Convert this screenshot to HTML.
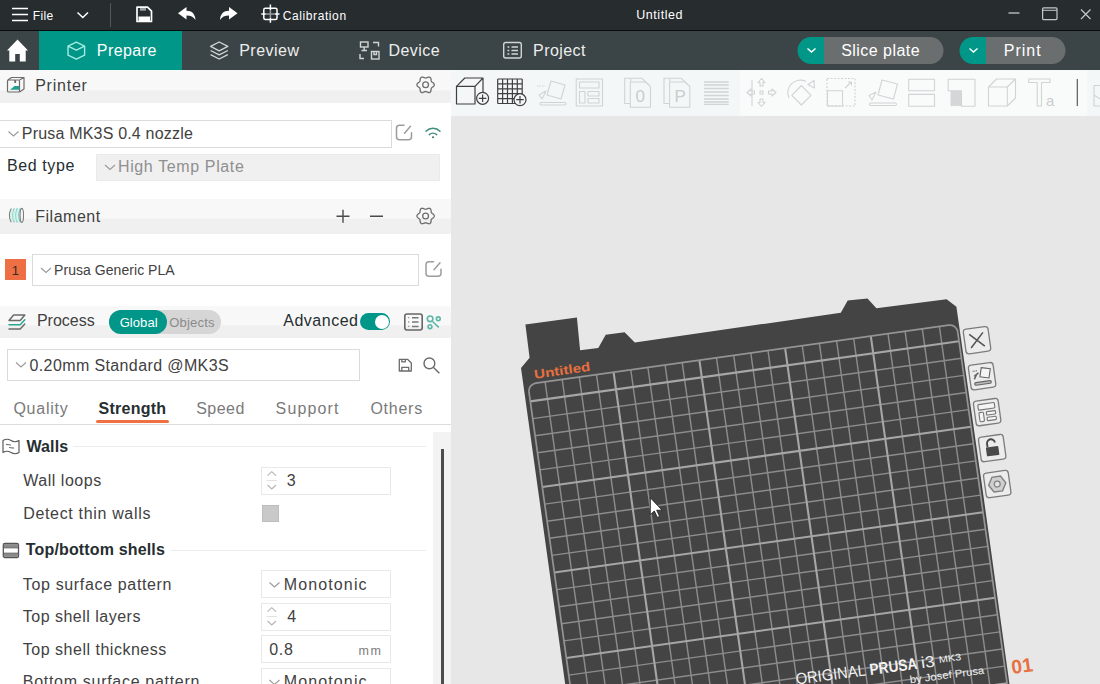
<!DOCTYPE html>
<html><head><meta charset="utf-8"><title>Untitled</title>
<style>
html,body{margin:0;padding:0;}
body{width:1100px;height:684px;overflow:hidden;position:relative;background:#fff;font-family:"Liberation Sans",sans-serif;color:#262e30;}
.abs{position:absolute;}
.t{position:absolute;white-space:nowrap;line-height:1;}
#titlebar{left:0;top:0;width:1100px;height:30px;background:#272d2f;border-bottom:1px solid #070c0d;}
#tabbar{left:0;top:31px;width:1100px;height:39px;background:#3b4446;}
#tabactive{left:39px;top:31px;width:143px;height:39px;background:#009688;}
#side{left:0;top:70px;width:451px;height:614px;background:#fff;}
#canvas{left:451px;top:70px;width:649px;height:614px;background:#e7e7e7;}
#toolbar{left:451px;top:70px;width:649px;height:45.500px;background:#f3f7f7;}
.hdr{position:absolute;left:0;width:451px;background:linear-gradient(#f9f9f9 0%,#f6f6f6 45%,#f0f0f0 55%,#f1f1f1 100%);}
.lab{color:#414141;font-size:16px;}
.chev{fill:none;stroke:#9a9a9a;stroke-width:1.1;}
.box{position:absolute;border:1px solid #dbdbdb;background:#fff;box-sizing:border-box;}
svg{position:absolute;overflow:visible;}
</style></head><body>
<div id="titlebar" class="abs"></div>
<div id="tabbar" class="abs"></div>
<div id="tabactive" class="abs"></div>
<div id="side" class="abs"></div>
<div id="canvas" class="abs"></div>
<div id="toolbar" class="abs"></div>

<svg class="abs" style="left:0;top:0" width="1100" height="31" viewBox="0 0 1100 31">
 <g stroke="#fff" stroke-width="1.6" fill="none">
  <path d="M12 8.5H28M12 14.5H28M12 20.5H28"/>
  <path d="M77.5 12.5L82.8 17.5L88 12.5" stroke-width="1.5"/>
 </g>
 <path d="M110.5 3V27" stroke="#50585b" stroke-width="1"/>
 <!-- save -->
 <path d="M137 7.2h10.5l4 4v10.3h-14.5z" fill="none" stroke="#fff" stroke-width="1.7" stroke-linejoin="round"/>
 <path d="M138.5 16.5h11.5v4.5h-11.5z" fill="#fff"/>
 <path d="M140 7.5h6v3.2h-6z" fill="#fff" opacity=".55"/>
 <!-- undo -->
 <path d="M178 13.2L186.5 7v3.8c5.5 0 8.6 3.2 9 9.2c-2-3.2-4.600-4.600-9-4.600v4z" fill="#fff"/>
 <!-- redo -->
 <path d="M237.500 13.2L229 7v3.8c-5.5 0-8.6 3.200-9 9.200c2-3.200 4.600-4.600 9-4.600v4z" fill="#fff"/>
 <!-- calibration -->
 <g stroke="#fff" fill="none" stroke-width="1.5">
  <rect x="263.800" y="8.300" width="13.200" height="11.300" rx="1.500"/>
  <path d="M270.400 4.500v5.500M270.400 18v4.800M261.300 13.900h4.500M275 13.900h4.500"/>
  <path d="M270.400 10v8M265.800 13.900h9.200" stroke="#9aa0a2"/>
 </g>
 <!-- window controls -->
 <path d="M1008.500 13h11" stroke="#c4c8c8" stroke-width="1.300"/>
 <rect x="1042.600" y="7.800" width="14.400" height="11.800" rx="1" fill="none" stroke="#c4c8c8" stroke-width="1.200"/>
 <path d="M1042.600 10.300h14.400" stroke="#c4c8c8" stroke-width="1"/>
 <path d="M1081 9.500l9.500 9.500M1090.500 9.500l-9.500 9.500" stroke="#c4c8c8" stroke-width="1.200"/>
</svg>


<svg class="abs" style="left:0;top:31px" width="1100" height="39" viewBox="0 31 1100 39">
 <!-- home -->
 <path d="M17.500 39.600L28 50.400H25.700V61.500H19.800V54H15.200V61.500H9.300V50.400H7z" fill="#fff"/>
 <!-- prepare cube -->
 <g fill="none" stroke="#a5ebe2" stroke-width="1.4" stroke-linejoin="round">
  <path d="M76.300 42.200L84.600 46.200V55.200L76.300 59.200L68 55.200V46.200z"/>
  <path d="M68 46.200L76.300 50.200L84.600 46.200"/>
 </g>
 <!-- preview layers -->
 <g fill="none" stroke="#d2d5d5" stroke-width="1.4" stroke-linejoin="round">
  <path d="M219.200 42L227.800 46.400L219.200 50.800L210.600 46.400z"/>
  <path d="M210.600 50.500L219.200 54.900L227.800 50.500"/>
  <path d="M210.600 54.600L219.200 59L227.800 54.600"/>
 </g>
 <!-- device -->
 <g fill="none" stroke="#d2d5d5" stroke-width="1.400">
  <rect x="360.500" y="42" width="7.500" height="5"/>
  <path d="M364.200 47v3M361.500 50.500h5.500"/>
  <path d="M373 42.500h5.500v4M360 54v4.500h4"/>
  <rect x="371.500" y="51.500" width="7.500" height="7.500"/>
  <path d="M374 51.500v3h2.500v-3"/>
 </g>
 <!-- project -->
 <g fill="none" stroke="#d2d5d5" stroke-width="1.400">
  <rect x="503.700" y="42.500" width="17.600" height="15.500" rx="2"/>
  <path d="M507.500 47h1.800M511.500 47h6.500M507.500 50.500h1.800M511.500 50.500h6.500M507.500 54h1.800M511.500 54h6.500"/>
 </g>
 <!-- slice plate -->
 <path d="M811 37h13v27h-13a13.500 13.500 0 0 1 0-27z" fill="#009688"/>
 <path d="M824 37h106a13.500 13.500 0 0 1 0 27h-106z" fill="#6b6e6f"/>
 <path d="M807.500 48.500L811.500 52L815.500 48.500" fill="none" stroke="#fff" stroke-width="1.500"/>
 <path d="M973 37h13v27h-13a13.500 13.500 0 0 1 0-27z" fill="#009688"/>
 <path d="M986 37h66a13.500 13.500 0 0 1 0 27h-66z" fill="#6b6e6f"/>
 <path d="M969.500 48.500L973.500 52L977.500 48.500" fill="none" stroke="#fff" stroke-width="1.500"/>
</svg>


<div class="hdr" style="top:70px;height:32.500px;background:linear-gradient(#f8f8f8 0,#f8f8f8 19.500px,#f0f0f0 21px,#f0f0f0 100%);"></div>
<div class="hdr" style="top:198.500px;height:35px;background:linear-gradient(#f8f8f8 0,#f8f8f8 18.500px,#f0f0f0 20.500px,#f0f0f0 100%);"></div>
<div class="hdr" style="top:305.500px;height:32px;background:linear-gradient(#f8f8f8 0,#f8f8f8 18.500px,#f0f0f0 20.500px,#f0f0f0 100%);"></div>
<!-- scroll area -->
<div class="abs" style="left:433px;top:432px;width:18px;height:252px;background:#f3f3f3;"></div>
<div class="abs" style="left:440.500px;top:449px;width:3px;height:235px;background:#4d4d4d;"></div>
<!-- boxes -->
<div class="box" style="left:-1px;top:120px;width:393px;height:28px;"></div>
<div class="box" style="left:96px;top:154px;width:344px;height:27px;background:#f0f0f0;border-color:#eaeaea;"></div>
<div class="box" style="left:32px;top:254px;width:387px;height:32px;"></div>
<div class="box" style="left:7px;top:349px;width:353px;height:32px;"></div>
<div class="box" style="left:261px;top:467px;width:130px;height:28px;border-color:#e8e8e8;"></div>
<div class="box" style="left:261px;top:570px;width:130px;height:28px;border-color:#e8e8e8;"></div>
<div class="box" style="left:261px;top:603px;width:130px;height:28px;border-color:#e8e8e8;"></div>
<div class="box" style="left:261px;top:635px;width:130px;height:28px;border-color:#e8e8e8;"></div>
<div class="box" style="left:261px;top:668px;width:130px;height:28px;border-color:#e8e8e8;"></div>
<div class="abs" style="left:5px;top:259px;width:21px;height:21px;background:#ed6f43;"></div>
<div class="abs" style="left:262px;top:505px;width:15px;height:15px;background:#c9c9c9;border:1px solid #bdbdbd;box-sizing:content-box;"></div>
<!-- toggle -->
<div class="abs" style="left:109px;top:310px;width:112px;height:24px;border-radius:12px;background:#d6d6d6;"></div>
<div class="abs" style="left:109px;top:310px;width:58px;height:24px;border-radius:12px;background:#009688;"></div>
<div class="abs" style="left:360px;top:313px;width:30px;height:17px;border-radius:9px;background:#009688;"></div>
<div class="abs" style="left:374.500px;top:314.500px;width:14px;height:14px;border-radius:7px;background:#fff;"></div>
<!-- tab lines -->
<div class="abs" style="left:0;top:424px;width:451px;height:1px;background:#dcdcdc;"></div>
<div class="abs" style="left:96px;top:420px;width:73px;height:3px;background:#ee7043;border-radius:1.500px;"></div>
<div class="abs" style="left:73px;top:446px;width:353px;height:1px;background:#ececec;"></div>
<div class="abs" style="left:171px;top:550px;width:255px;height:1px;background:#ececec;"></div>
<!-- texts -->
<svg class="abs" style="left:0;top:0" width="460" height="684" viewBox="0 0 460 684">
<g fill="none" stroke="#6b6b6b" stroke-width="1.2" stroke-linejoin="round">
<rect x="7.500" y="80" width="12" height="12" rx="1"/>
<path d="M7.800 80L11.500 77.500H24V89L19.500 92M19.500 80L24 77.500"/>
<path d="M15.200 80v3" stroke-width="1.800"/>
</g>
<path d="M10 89.800L14.500 86H19v3.800z" fill="#1fa08f"/>
<path d="M434.30 84.80L434.13 85.55L433.68 86.22L433.04 86.79L432.37 87.26L431.79 87.69L431.40 88.15L431.20 88.72L431.12 89.43L431.04 90.24L430.87 91.08L430.51 91.82L429.95 92.33L429.22 92.56L428.40 92.51L427.59 92.24L426.85 91.89L426.20 91.61L425.60 91.50L425.00 91.61L424.35 91.89L423.61 92.24L422.80 92.51L421.98 92.56L421.25 92.33L420.69 91.82L420.33 91.08L420.16 90.24L420.08 89.43L420.00 88.72L419.80 88.15L419.41 87.69L418.83 87.26L418.16 86.79L417.52 86.22L417.07 85.55L416.90 84.80L417.07 84.05L417.52 83.38L418.16 82.81L418.83 82.34L419.41 81.91L419.80 81.45L420.00 80.88L420.08 80.17L420.16 79.36L420.33 78.52L420.69 77.78L421.25 77.27L421.98 77.04L422.80 77.09L423.61 77.36L424.35 77.71L425.00 77.99L425.60 78.10L426.20 77.99L426.85 77.71L427.59 77.36L428.40 77.09L429.22 77.04L429.95 77.27L430.51 77.78L430.87 78.52L431.04 79.36L431.12 80.17L431.20 80.88L431.40 81.45L431.79 81.91L432.37 82.34L433.04 82.81L433.68 83.38L434.13 84.05z" fill="none" stroke="#6e6e6e" stroke-width="1.3"/><circle cx="425.6" cy="84.8" r="2.9" fill="none" stroke="#6e6e6e" stroke-width="1.3"/>
<path d="M434.30 216.00L434.13 216.75L433.68 217.42L433.04 217.99L432.37 218.46L431.79 218.89L431.40 219.35L431.20 219.92L431.12 220.63L431.04 221.44L430.87 222.28L430.51 223.02L429.95 223.53L429.22 223.76L428.40 223.71L427.59 223.44L426.85 223.09L426.20 222.81L425.60 222.70L425.00 222.81L424.35 223.09L423.61 223.44L422.80 223.71L421.98 223.76L421.25 223.53L420.69 223.02L420.33 222.28L420.16 221.44L420.08 220.63L420.00 219.92L419.80 219.35L419.41 218.89L418.83 218.46L418.16 217.99L417.52 217.42L417.07 216.75L416.90 216.00L417.07 215.25L417.52 214.58L418.16 214.01L418.83 213.54L419.41 213.11L419.80 212.65L420.00 212.08L420.08 211.37L420.16 210.56L420.33 209.72L420.69 208.98L421.25 208.47L421.98 208.24L422.80 208.29L423.61 208.56L424.35 208.91L425.00 209.19L425.60 209.30L426.20 209.19L426.85 208.91L427.59 208.56L428.40 208.29L429.22 208.24L429.95 208.47L430.51 208.98L430.87 209.72L431.04 210.56L431.12 211.37L431.20 212.08L431.40 212.65L431.79 213.11L432.37 213.54L433.04 214.01L433.68 214.58L434.13 215.25z" fill="none" stroke="#6e6e6e" stroke-width="1.3"/><circle cx="425.6" cy="216" r="2.9" fill="none" stroke="#6e6e6e" stroke-width="1.3"/>
<g fill="none" stroke="#9c9c9c" stroke-width="1.5" stroke-linecap="round"><path d="M404.0 125.3H399.5a3 3 0 0 0 -3 3V136.7a3 3 0 0 0 3 3H408.5a3 3 0 0 0 3 -3V132.8"/><path d="M404.5 133.3L410.5 126.3"/></g>
<g fill="none" stroke="#9c9c9c" stroke-width="1.5" stroke-linecap="round"><path d="M433.5 261.8H429a3 3 0 0 0 -3 3V273.2a3 3 0 0 0 3 3H438a3 3 0 0 0 3 -3V269.3"/><path d="M434 269.8L440 262.8"/></g>
<g fill="none" stroke="#3f8f7c" stroke-width="1.5" stroke-linecap="round">
<path d="M426 131.200A10 10 0 0 1 440 131.200"/>
<path d="M429.300 134.600A5.500 5.500 0 0 1 436.700 134.600"/>
</g><circle cx="433" cy="137.200" r="1" fill="#3f6f66"/>
<path class="chev" d="M8.5 131.5L13.5 136.0L18.5 131.5"/><path class="chev" d="M105 165L110.0 169.5L115 165"/><path class="chev" d="M41 268L46.0 272.5L51 268"/><path class="chev" d="M16 362.5L21.0 367.0L26 362.5"/><path class="chev" d="M269.5 582.5L274.5 587.0L279.5 582.5"/><path class="chev" d="M269.5 680L274.5 684.5L279.5 680"/>
<g fill="none" stroke-width="1.100">
<path d="M11.300 208.500Q7.500 215.500 11.300 222.300" stroke="#7a7a7a"/>
<path d="M14.300 208.500Q10.800 215.500 14.300 222.300" stroke="#39b3a3"/>
<path d="M17.300 208.500Q13.800 215.500 17.300 222.300" stroke="#39b3a3"/>
<path d="M20.300 208.500Q16.800 215.500 20.300 222.300" stroke="#39b3a3"/>
<ellipse cx="21.800" cy="215.400" rx="1.700" ry="7" stroke="#7a7a7a"/>
</g>
<path d="M11.500 209.500Q9 215.500 11.500 221.500H20Q17.500 215.500 20 209.500z" fill="#c9f0ea" opacity=".6"/>
<path d="M336.500 216.200h13M343 209.700v13M370 216.200h13" stroke="#4a4a4a" stroke-width="1.400" fill="none"/>
<g fill="none" stroke-width="1.500" stroke-linejoin="round" stroke-linecap="round">
<path d="M13.600 315H24.800L20.200 320.500H9z" stroke="#6b6b6b"/>
<path d="M9 324.800H20.200L24.800 319.800" stroke="#26a594"/>
<path d="M9 329H20.200L24.800 324" stroke="#6b6b6b"/>
</g>
<rect x="404.800" y="314" width="17.400" height="16" rx="2.200" fill="none" stroke="#666" stroke-width="1.600"/>
<path d="M412 317.700h6.500M412 322h6.500M412 326.400h6.500" stroke="#777" stroke-width="1.500"/>
<path d="M408 317.700h1.300M408 322h1.300M408 326.400h1.300" stroke="#999" stroke-width="1.300"/>
<g fill="none" stroke="#5cb5a6" stroke-width="1.600"><circle cx="430.100" cy="318.800" r="2.800"/><circle cx="438.300" cy="318.800" r="1.900"/><circle cx="430" cy="326.700" r="1.900"/><path d="M432.500 321.500L438.800 327.300"/></g>
<g fill="none" stroke="#6b6b6b" stroke-width="1.300" stroke-linejoin="round">
<path d="M399.300 359.300H407.500L411.300 363V371H399.300z"/>
<path d="M401.800 371V367.300H408.700V371"/>
<path d="M401.800 359.500V361.800H405.300V359.500"/>
</g>
<circle cx="429.400" cy="363.400" r="5.400" fill="none" stroke="#6b6b6b" stroke-width="1.400"/>
<path d="M433.500 367.500L439.400 373.300" stroke="#6b6b6b" stroke-width="1.400"/>
<path d="M267.500 475.7L271.800 471.7L276 475.7M267.500 485L271.800 489L276 485" fill="none" stroke="#b5b5b5" stroke-width="1.100"/><path d="M266.500 480.5H277" stroke="#e2e2e2" stroke-width="1"/>
<path d="M267.500 611.7L271.800 607.7L276 611.7M267.500 621L271.800 625L276 621" fill="none" stroke="#b5b5b5" stroke-width="1.100"/><path d="M266.500 616.5H277" stroke="#e2e2e2" stroke-width="1"/>
<g fill="none" stroke="#5a5a5a" stroke-width="1.200" stroke-linejoin="round">
<path d="M3 440.500Q7 438 11 440.500T19 440.500V452.500Q15 455 11 452.500T3 452.500z"/>
<path d="M6 444.300L11 445M9 447.500L14 448.200" stroke="#777"/>
</g>
<rect x="3.300" y="543.500" width="15.200" height="14" rx="1.600" fill="#fff" stroke="#555" stroke-width="1.300"/>
<rect x="3.900" y="544.100" width="14" height="3.300" fill="#8a8a8a"/>
<rect x="3.900" y="553.600" width="14" height="3.300" fill="#8a8a8a"/>
<path d="M3.500 547.800H18.500M3.500 553.200H18.500" stroke="#555" stroke-width="1"/>
</svg>

<div class="t" id="t0" style="left:32.70px;top:9.64px;font-size:12px;color:#fff;letter-spacing:0.419px;">File</div>
<div class="t" id="t1" style="left:282.70px;top:9.64px;font-size:12px;color:#fff;letter-spacing:0.602px;">Calibration</div>
<div class="t" id="t2" style="left:636.27px;top:9.22px;font-size:12.5px;color:#fff;letter-spacing:0.537px;">Untitled</div>
<div class="t" id="t3" style="left:96.80px;top:42.76px;font-size:16px;color:#fff;letter-spacing:0.430px;">Prepare</div>
<div class="t" id="t4" style="left:239.20px;top:42.76px;font-size:16px;color:#eceeee;letter-spacing:0.482px;">Preview</div>
<div class="t" id="t5" style="left:388.40px;top:42.76px;font-size:16px;color:#eceeee;letter-spacing:0.459px;">Device</div>
<div class="t" id="t6" style="left:533.10px;top:42.76px;font-size:16px;color:#eceeee;letter-spacing:0.434px;">Project</div>
<div class="t" id="t7" style="left:841.20px;top:42.76px;font-size:16px;color:#fff;letter-spacing:0.457px;">Slice plate</div>
<div class="t" id="t8" style="left:1003.80px;top:42.76px;font-size:16px;color:#fff;letter-spacing:0.973px;">Print</div>
<div class="t" id="t9" style="left:35.20px;top:77.96px;font-size:16px;color:#414141;letter-spacing:0.762px;">Printer</div>
<div class="t" id="t10" style="left:21.80px;top:126.46px;font-size:16px;color:#414141;letter-spacing:0.190px;">Prusa MK3S 0.4 nozzle</div>
<div class="t" id="t11" style="left:6.90px;top:158.46px;font-size:16px;color:#262e30;letter-spacing:0.621px;">Bed type</div>
<div class="t" id="t12" style="left:118.00px;top:159.06px;font-size:16px;color:#8f8f8f;letter-spacing:0.621px;">High Temp Plate</div>
<div class="t" id="t13" style="left:35.20px;top:208.66px;font-size:16px;color:#414141;letter-spacing:0.520px;">Filament</div>
<div class="t" id="t14" style="left:11.85px;top:264.30px;font-size:13px;color:#3a2a22;">1</div>
<div class="t" id="t15" style="left:54.10px;top:263.05px;font-size:14px;color:#414141;letter-spacing:0.047px;">Prusa Generic PLA</div>
<div class="t" id="t16" style="left:36.90px;top:313.46px;font-size:16px;color:#414141;letter-spacing:0.017px;">Process</div>
<div class="t" id="t17" style="left:119.65px;top:316.30px;font-size:13px;color:#fff;letter-spacing:0.084px;">Global</div>
<div class="t" id="t18" style="left:169.25px;top:316.30px;font-size:13px;color:#8b8b8b;letter-spacing:0.187px;">Objects</div>
<div class="t" id="t19" style="left:283.20px;top:313.46px;font-size:16px;color:#262e30;letter-spacing:0.518px;">Advanced</div>
<div class="t" id="t20" style="left:29.50px;top:357.96px;font-size:16px;color:#414141;letter-spacing:0.383px;">0.20mm Standard @MK3S</div>
<div class="t" id="t21" style="left:13.40px;top:401.26px;font-size:16px;color:#7a7a7a;letter-spacing:0.767px;">Quality</div>
<div class="t" id="t22" style="left:98.60px;top:401.26px;font-size:16px;color:#262e30;font-weight:bold;letter-spacing:0.246px;">Strength</div>
<div class="t" id="t23" style="left:196.20px;top:401.26px;font-size:16px;color:#7a7a7a;letter-spacing:0.484px;">Speed</div>
<div class="t" id="t24" style="left:275.60px;top:401.26px;font-size:16px;color:#7a7a7a;letter-spacing:1.142px;">Support</div>
<div class="t" id="t25" style="left:370.40px;top:401.26px;font-size:16px;color:#7a7a7a;letter-spacing:0.757px;">Others</div>
<div class="t" id="t26" style="left:26.40px;top:438.66px;font-size:16px;color:#262e30;font-weight:bold;letter-spacing:0.149px;">Walls</div>
<div class="t" id="t27" style="left:23.20px;top:473.16px;font-size:16px;color:#414141;letter-spacing:0.531px;">Wall loops</div>
<div class="t" id="t28" style="left:286.70px;top:473.16px;font-size:16px;color:#414141;">3</div>
<div class="t" id="t29" style="left:23.20px;top:505.56px;font-size:16px;color:#414141;letter-spacing:0.669px;">Detect thin walls</div>
<div class="t" id="t30" style="left:25.80px;top:542.46px;font-size:16px;color:#262e30;font-weight:bold;letter-spacing:0.150px;">Top/bottom shells</div>
<div class="t" id="t31" style="left:22.80px;top:576.96px;font-size:16px;color:#414141;letter-spacing:0.652px;">Top surface pattern</div>
<div class="t" id="t32" style="left:283.70px;top:576.96px;font-size:16px;color:#414141;letter-spacing:1.134px;">Monotonic</div>
<div class="t" id="t33" style="left:22.80px;top:609.16px;font-size:16px;color:#414141;letter-spacing:0.488px;">Top shell layers</div>
<div class="t" id="t34" style="left:287.20px;top:609.16px;font-size:16px;color:#414141;">4</div>
<div class="t" id="t35" style="left:22.80px;top:641.76px;font-size:16px;color:#414141;letter-spacing:0.511px;">Top shell thickness</div>
<div class="t" id="t36" style="left:269.20px;top:641.76px;font-size:16px;color:#414141;letter-spacing:0.675px;">0.8</div>
<div class="t" id="t37" style="left:358.38px;top:644.72px;font-size:12.5px;color:#7c7c7c;letter-spacing:1.822px;">mm</div>
<div class="t" id="t38" style="left:22.80px;top:674.26px;font-size:16px;color:#414141;letter-spacing:0.702px;">Bottom surface pattern</div>
<div class="t" id="t39" style="left:283.70px;top:674.26px;font-size:16px;color:#414141;letter-spacing:1.134px;">Monotonic</div>

<svg class="abs" style="left:0;top:0" width="1100" height="120" viewBox="0 0 1100 120">
<rect x="740" y="70" width="347" height="45.500" fill="#f9fbfb"/>
<g fill="none" stroke="#404040" stroke-width="1.200" stroke-linejoin="round">
<path d="M456.500 86.300H475V104H456.500z"/>
<path d="M456.500 86.300L464.800 78H483L475 86.300M483 78V92"/>
<circle cx="482.600" cy="98.300" r="6" fill="#f3f7f7"/>
<path d="M478.800 98.300h7.600M482.600 94.500v7.600"/>
</g>
<g fill="none" stroke="#404040" stroke-width="1.200"><path d="M497.7 79V103.500M497.700 79.0H522.200M502.6 79V103.500M497.700 83.9H522.200M507.5 79V103.500M497.700 88.8H522.200M512.4 79V103.500M497.700 93.7H522.200M517.3 79V103.500M497.700 98.6H522.200M522.2 79V103.500M497.700 103.5H522.200"/><circle cx="520" cy="99.700" r="6" fill="#f3f7f7"/><path d="M516.200 99.700h7.600M520 95.900v7.600"/></g>
<g fill="none" stroke="#d0d4d4" stroke-width="1.100" stroke-linejoin="round">
<path d="M551 81L565 85L561 99L547 95z"/><path d="M546 91L539 95L542 99z"/><rect x="540" y="102.500" width="26" height="2.500" rx="1.200"/><path d="M537 86h8" stroke-dasharray="1.500 1"/>
<rect x="576.200" y="79" width="26.300" height="27"/><rect x="579.500" y="82" width="19.500" height="6"/><rect x="579.500" y="91.500" width="5.500" height="11.500"/><rect x="588" y="91.500" width="11" height="4.500"/><rect x="588" y="98.500" width="11" height="4.500"/>
<path d="M630.7 81.5V78.2H641.7L645.7 82"/><path d="M630.3000000000001 103.5H624.7V78.2H630.7"/><path d="M630.3000000000001 82H645.7L650.5 86.5V107.3H630.3000000000001z"/>
<path d="M670 81.5V78.2H681L685 82"/><path d="M669.6 103.5H664V78.2H670"/><path d="M669.6 82H685L689.8 86.5V107.3H669.6z"/>
<path d="M704 82.0H728.700M704 85.0H728.700M704 88.5H728.700M704 92.0H728.700M704 95.5H728.700M704 99.0H728.700M704 102.0H728.700M704 104.4H728.700" stroke-width="1.300"/>
<path d="M761.500 78.500L765 82.500H763V86H760V82.500H758z"/><path d="M761.500 106.500L765 102.500H763V99H760V102.500H758z"/>
<path d="M747 92.500L751 89V91H754.500V94H751V96z"/><path d="M776 92.500L772 89V91H768.500V94H772V96z"/><rect x="760" y="91" width="3" height="3"/><path d="M752 80V106"/>
<path d="M801.400 85.500L811 95.300L801.400 105L791.800 95.300z"/><path d="M789 98A12.500 12.500 0 0 1 806 81.500"/><path d="M808 84.500L814 80.500L814.500 88z"/>
<rect x="827" y="78.500" width="28" height="27.500" stroke-dasharray="2 1.500"/><rect x="827.500" y="90.700" width="15" height="15.300"/><path d="M845 88L851.500 82M848 82H851.500V85.500"/>
<path d="M882 80L897.500 84L893.500 99L878 95z"/><path d="M876 92L869 95.500L872 100z"/><rect x="869.500" y="103" width="27" height="2.500" rx="1.200"/>
<rect x="908.700" y="79.300" width="25.800" height="11.400"/><rect x="908.700" y="94.400" width="25.800" height="11.800"/>
<path d="M948.200 79.300H975V106.200H961.500V90.700H948.200z"/>
<path d="M988.500 87H1007.300V106H988.500z"/><path d="M988.500 87L996.500 79H1015.500L1007.300 87M1015.500 79V98L1007.300 106"/>
<path d="M1028.700 79H1050V82.500H1041.500V106H1037.200V82.500H1028.700z"/>
<path d="M1100 85.500H1094V106H1100M1094 95L1100 99"/>
</g>
<rect x="950.500" y="91" width="10.500" height="15" fill="#d3d7d7"/>
<path d="M1077.300 79V106" stroke="#5a5a5a" stroke-width="1.200"/>
<text x="635.500" y="101.500" font-family="Liberation Sans, sans-serif" font-size="17" fill="#c9cdcd">0</text>
<text x="674.500" y="101.500" font-family="Liberation Sans, sans-serif" font-size="17" fill="#c9cdcd">P</text>
<text x="1046" y="105.800" font-family="Liberation Sans, sans-serif" font-size="15" fill="#c9cdcd">a</text>
</svg>

<svg class="abs" style="left:451px;top:115.500px;" width="649" height="568.500" viewBox="451 115.500 649 568.500">
<path d="M521.0 367.4L529.6 357.3L525.4 323.9L576.9 317.1L580.1 349.7L598.3 347.4L605.7 334.2L624.6 331.7L634.8 342.0L840.8 312.3L847.7 300.0L867.5 297.9L876.4 307.8L946.6 298.8L956.4 306.2L983.3 494.2L1011.2 696.1L575.5 757.3z" fill="#444"/>
<path d="M545.1 381.4L596.9 750.8M562.2 379.0L614.1 748.4M579.3 376.6L631.2 746.0M596.5 374.2L648.4 743.6M630.8 369.4L682.7 738.8M647.9 367.0L699.8 736.4M665.1 364.6L717.0 733.9M682.2 362.2L734.1 731.5M716.5 357.3L768.4 726.7M733.7 354.9L785.5 724.3M750.8 352.5L802.7 721.9M768.0 350.1L819.8 719.5M802.3 345.3L854.1 714.7M819.4 342.9L871.3 712.2M836.6 340.5L888.4 709.8M853.7 338.0L905.6 707.4M888.0 333.2L939.9 702.6M905.1 330.8L957.0 700.2M922.3 328.4L974.2 697.8M939.4 326.0L991.3 695.4M532.7 418.1L961.4 357.8M535.1 435.2L963.8 374.9M537.5 452.3L966.2 392.0M539.9 469.4L968.6 409.1M544.7 503.6L973.4 443.3M547.1 520.7L975.8 460.4M549.5 537.8L978.2 477.5M551.9 554.9L980.6 494.6M556.7 589.1L985.4 528.8M559.1 606.2L987.8 545.9M561.5 623.3L990.2 563.0M563.9 640.4L992.6 580.1M568.7 674.6L997.4 614.3M571.1 691.7L999.8 631.4M573.5 708.8L1002.2 648.5M575.9 725.9L1004.6 665.6" stroke="#8c8c8c" stroke-width="1.45" fill="none"/>
<path d="M613.6 371.8L665.5 741.2M699.4 359.7L751.3 729.1M785.1 347.7L837.0 717.1M870.8 335.6L922.7 705.0M530.3 400.9L959.0 340.7M542.3 486.5L971.0 426.2M554.3 572.0L983.0 511.7M566.3 657.5L995.0 597.2M578.3 743.0L1007.0 682.7" stroke="#a6a6a6" stroke-width="2.1" fill="none"/>
<path d="M579.8 753.2L529.0 391.7L528.9 390.2L529.2 388.6L529.7 387.2L530.5 385.8L531.6 384.7L532.9 383.8L534.3 383.1L535.8 382.7L948.7 324.7L950.3 324.6L951.8 324.9L953.3 325.4L954.6 326.2L955.7 327.3L956.7 328.5L957.3 329.9L957.7 331.4L1008.5 693.0" stroke="#949494" stroke-width="1.7" fill="none"/>
<text transform="matrix(1.7147 -0.2411 0.2402 1.7101 534.80 378.17)" x="0" y="0" font-family="Liberation Sans, sans-serif" font-weight="bold" font-size="7.300" fill="#e8703f" textLength="32.600" lengthAdjust="spacingAndGlyphs">Untitled</text>
<g transform="matrix(1.7147 -0.2411 0.2402 1.7101 977.03 339.71)"><rect x="-7.200" y="-7.200" width="14.400" height="14.400" rx="1.800" fill="#ececec" stroke="#7c7c7c" stroke-width="0.750"/><path d="M-4 -4L4 4M4 -4L-4 4" stroke="#555" stroke-width="0.900" fill="none"/></g>
<g transform="matrix(1.7147 -0.2411 0.2402 1.7101 982.08 375.67)"><rect x="-7.200" y="-7.200" width="14.400" height="14.400" rx="1.800" fill="#ececec" stroke="#7c7c7c" stroke-width="0.750"/><g fill="none" stroke="#666" stroke-width="0.650"><path d="M0.200 -5L5.300 -3.600L3.800 1.600L-1.300 0.200z" fill="#f4f4f4"/><path d="M-4.500 -0.500L-1.800 -2.200M-4.700 1.200L-3 -1.500" stroke-width="0.900"/><path d="M-5 -3.500h2.500" stroke-dasharray="0.600 0.400"/><rect x="-4.800" y="3.200" width="9.600" height="1.500" rx="0.700" fill="#bbb"/></g></g>
<g transform="matrix(1.7147 -0.2411 0.2402 1.7101 987.14 411.63)"><rect x="-7.200" y="-7.200" width="14.400" height="14.400" rx="1.800" fill="#ececec" stroke="#7c7c7c" stroke-width="0.750"/><g fill="#f4f4f4" stroke="#777" stroke-width="0.650"><rect x="-4.800" y="-5" width="9.600" height="3.200" rx="0.500"/><rect x="-4.800" y="-0.300" width="2.600" height="5.300" rx="0.500"/><rect x="-0.500" y="-0.300" width="5.300" height="2" rx="0.500"/><rect x="-0.500" y="3" width="5.300" height="2" rx="0.500"/></g></g>
<g transform="matrix(1.7147 -0.2411 0.2402 1.7101 992.19 447.60)"><rect x="-7.200" y="-7.200" width="14.400" height="14.400" rx="1.800" fill="#ececec" stroke="#7c7c7c" stroke-width="0.750"/><rect x="-3.600" y="-0.800" width="7.200" height="5.200" rx="0.500" fill="#4a4a4a"/><path d="M-2.600 -0.800V-2.800A2.300 2.300 0 0 1 2 -3" fill="none" stroke="#4a4a4a" stroke-width="1.100"/></g>
<g transform="matrix(1.7147 -0.2411 0.2402 1.7101 997.24 483.56)"><rect x="-7.200" y="-7.200" width="14.400" height="14.400" rx="1.800" fill="#ececec" stroke="#7c7c7c" stroke-width="0.750"/><path d="M-5 0L-2.500 -4.300H2.500L5 0L2.500 4.300H-2.500z" fill="#cfcfcf" stroke="#808080" stroke-width="0.800"/><circle r="1.700" fill="#e4e4e4" stroke="#808080" stroke-width="0.700"/></g>
<text transform="translate(1012.300 673.400) rotate(-7.600)" font-family="Liberation Sans, sans-serif" font-weight="bold" font-size="19.500" fill="#e8703f" textLength="21.500" lengthAdjust="spacingAndGlyphs">01</text>
<g transform="translate(796.400 684) rotate(-7.400)" font-family="Liberation Sans, sans-serif" fill="#f2f2f2"><text x="0" y="0" font-size="16" textLength="70.500" lengthAdjust="spacingAndGlyphs">ORIGINAL</text><text x="74.500" y="0" font-size="16" font-weight="bold" textLength="48" lengthAdjust="spacingAndGlyphs">PRUSA</text><text x="126.500" y="0" font-size="16" textLength="13.500" lengthAdjust="spacingAndGlyphs">i3</text><text x="144.500" y="-3" font-size="9.500" textLength="22.500" lengthAdjust="spacingAndGlyphs">MK3</text><text x="113" y="13.500" font-size="10.500" textLength="75" lengthAdjust="spacingAndGlyphs">by Josef Prusa</text></g>
<path transform="translate(650.300 497.200)" d="M0 0V17L4 13.300L7 19.700L9.300 18.600L6.400 12.500H11.800z" fill="#fff" stroke="#222" stroke-width="0.900" stroke-linejoin="round"/>
</svg>

</body></html>
